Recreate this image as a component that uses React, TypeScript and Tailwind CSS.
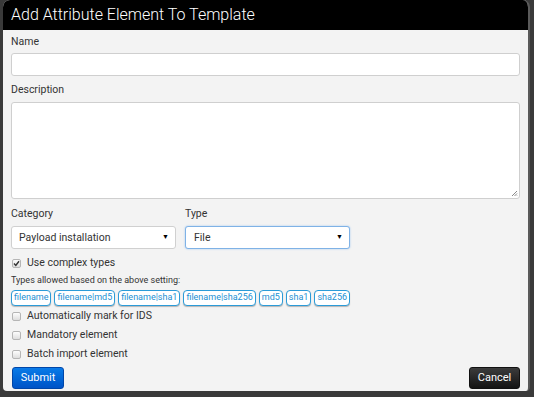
import React from 'react'

const Check = ({ checked = false }: { checked?: boolean }) => (
  <span className="w-[9px] h-[9px] rounded-[2px] border border-[#b5b5b5] bg-gradient-to-b from-[#fdfdfd] to-[#dedede] flex items-center justify-center shrink-0">
    {checked && (
      <svg width="7" height="7" viewBox="0 0 7 7">
        <path d="M1 3.6 L2.8 5.4 L6 1.3" fill="none" stroke="#333" strokeWidth="1.4" />
      </svg>
    )}
  </span>
)

const Select = ({ value, focused = false }: { value: string; focused?: boolean }) => (
  <div
    className={
      focused
        ? 'w-[165px] h-[23px] bg-white rounded-[3px] border border-[#7fb2e6] shadow-[0_0_2px_#9cc4ee] flex items-center justify-between pl-[8px] pr-[6px]'
        : 'w-[165px] h-[23px] bg-white rounded-[3px] border border-[#d0d0d0] flex items-center justify-between pl-[7px] pr-[6px]'
    }
  >
    <span className="text-[10.5px] text-[#333]">{value}</span>
    <span className="text-[7px] text-black">▼</span>
  </div>
)

export default function App() {
  const types = ['filename', 'filename|md5', 'filename|sha1', 'filename|sha256', 'md5', 'sha1', 'sha256']
  const flags = ['Automatically mark for IDS', 'Mandatory element', 'Batch import element']

  return (
    <div className="w-[534px] h-[397px] bg-[#3a3a3a] pl-[3px] pt-0 font-['Roboto',sans-serif]">
      <div className="w-[527px] h-[391px] bg-[#f3f3f3] rounded-t-[7px] rounded-b-[4px] border-r-2 border-[#5a5a5a] overflow-hidden flex flex-col">
        {/* Header */}
        <div className="h-[30px] bg-black flex items-center px-[8px] shrink-0">
          <h1 className="text-white text-[16px] font-light leading-none">
            Add Attribute Element To Template
          </h1>
        </div>

        <div className="px-[8px] flex flex-col flex-1">
          <label className="text-[10.5px] leading-[14px] text-[#333] mt-[5px]">Name</label>
          <div className="mt-[4px] h-[23px] bg-white rounded-[3px] border border-[#cfcfcf]" />

          <label className="text-[10.5px] leading-[14px] text-[#333] mt-[7px]">Description</label>
          <div className="mt-[5px] h-[97px] bg-white rounded-[3px] border border-[#cfcfcf] relative">
            <svg className="absolute right-[1px] bottom-[1px]" width="7" height="7" viewBox="0 0 7 7">
              <path d="M6 1 L1 6 M6 3.5 L3.5 6 M6 5.5 L5.5 6" stroke="#8a8a8a" strokeWidth="1" />
            </svg>
          </div>

          <div className="flex gap-[8px] mt-[8px]">
            <div className="flex flex-col">
              <label className="text-[10.5px] leading-[14px] text-[#333]">Category</label>
              <div className="mt-[5px]">
                <Select value="Payload installation" />
              </div>
            </div>
            <div className="flex flex-col ml-[1px]">
              <label className="text-[10.5px] leading-[14px] text-[#333]">Type</label>
              <div className="mt-[5px]">
                <Select value="File" focused />
              </div>
            </div>
          </div>

          <div className="flex items-center gap-[6px] mt-[7px] h-[14px] pl-[1px]">
            <Check checked />
            <span className="text-[10.5px] text-[#333]">Use complex types</span>
          </div>

          <div className="text-[9px] leading-[11px] text-[#333] mt-[5px]">
            Types allowed based on the above setting:
          </div>
          <div className="flex gap-[3px] mt-[4px]">
            {types.map((t) => (
              <span
                key={t}
                className="h-[16px] px-[2px] rounded-[4px] border-[1.5px] border-[#2b9bd8] bg-white shadow-[0_1px_1px_rgba(0,0,0,0.25)] text-[9px] leading-[13px] text-[#1d8fd2]"
              >
                {t}
              </span>
            ))}
          </div>

          <div className="flex flex-col gap-[5px] mt-[3px] pl-[1px]">
            {flags.map((f) => (
              <div key={f} className="flex items-center gap-[6px] h-[14px]">
                <Check />
                <span className="text-[10.5px] text-[#333]">{f}</span>
              </div>
            ))}
          </div>

          <div className="flex justify-between mt-[6px] pl-[1px]">
            <button className="w-[52px] h-[22px] rounded-[3px] bg-gradient-to-b from-[#0a7be8] to-[#0053c7] border border-[#0046a8] text-white text-[11px]">
              Submit
            </button>
            <button className="w-[51px] h-[22px] rounded-[3px] bg-gradient-to-b from-[#3c3c3c] to-[#141414] border border-[#111] text-white text-[11px]">
              Cancel
            </button>
          </div>
        </div>
      </div>
    </div>
  )
}
